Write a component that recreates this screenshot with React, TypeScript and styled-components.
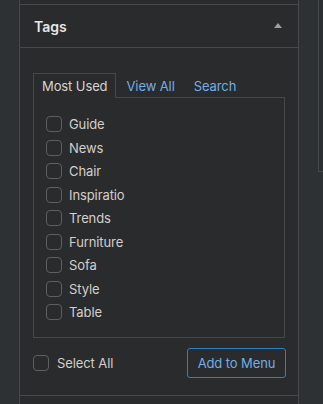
import { FC } from 'react'
import styled, { createGlobalStyle } from 'styled-components'

const GlobalStyle = createGlobalStyle`
  html, body {
    margin: 0;
    padding: 0;
    background: #2e3133;
    font-family: Inter, 'Liberation Sans', sans-serif;
    -webkit-font-smoothing: antialiased;
  }
`

const Page = styled.div`
  display: flex;
  height: 404px;
  overflow: hidden;
`

const Gutter = styled.div`
  width: 19px;
  flex: none;
`

const Sidebar = styled.div`
  width: 280px;
  flex: none;
  box-sizing: border-box;
  border-left: 1px solid #46484a;
  border-right: 1px solid #46484a;
  background: #2a2b2d;
`

const PrevSection = styled.div`
  height: 4px;
  border-bottom: 1px solid #46484a;
`

const Section = styled.section`
  border-bottom: 1px solid #46484a;
`

const Header = styled.div`
  height: 42px;
  display: flex;
  align-items: center;
  justify-content: space-between;
  padding: 0 16px 0 14px;
  border-bottom: 1px solid #46484a;
`

const Title = styled.h3`
  margin: 0;
  font-size: 14px;
  font-weight: 600;
  color: #e8e6e3;
`

const Caret = styled.span`
  width: 0;
  height: 0;
  border-left: 4px solid transparent;
  border-right: 4px solid transparent;
  border-bottom: 5px solid #a59f96;
  margin-top: -1px;
`

const Body = styled.div`
  padding: 25px 13px 17px 13px;
`

const Tabs = styled.div`
  display: flex;
  align-items: flex-start;
  height: 24px;
`

const Tab = styled.div<{ $active?: boolean }>`
  height: ${p => (p.$active ? '25px' : '24px')};
  box-sizing: border-box;
  display: flex;
  align-items: center;
  padding: 0 8px 0 8px;
  font-size: 13px;
  letter-spacing: -0.1px;
  color: ${p => (p.$active ? '#d8d4cd' : '#72aee6')};
  border: 1px solid ${p => (p.$active ? '#46484a' : 'transparent')};
  border-bottom: none;
  background: ${p => (p.$active ? '#2a2b2d' : 'transparent')};
  position: relative;
  z-index: 1;
  & + & {
    margin-left: 1px;
  }
`

const ListBox = styled.div`
  border: 1px solid #46484a;
  height: 241px;
  box-sizing: border-box;
  padding: 18px 12px 0 12px;
  display: flex;
  flex-direction: column;
  gap: 7.5px;
`

const Row = styled.label`
  display: flex;
  align-items: center;
  gap: 7px;
  height: 16px;
  font-size: 13px;
  letter-spacing: -0.1px;
  color: #d3cfc9;
`

const Box = styled.span`
  width: 16px;
  height: 16px;
  box-sizing: border-box;
  border: 1px solid #5e5f61;
  border-radius: 4px;
  flex: none;
`

const Footer = styled.div`
  display: flex;
  align-items: center;
  justify-content: space-between;
  margin-top: 10px;
  margin-right: -1px;
`

const SelectAll = styled(Row)`
  gap: 8px;
`

const Button = styled.button`
  width: 99px;
  height: 30px;
  box-sizing: border-box;
  border: 1px solid #2f7fc4;
  border-radius: 3px;
  background: transparent;
  color: #72aee6;
  font-family: inherit;
  font-size: 13px;
  letter-spacing: -0.1px;
  padding: 0;
`

const RightCol = styled.div`
  flex: 1;
  padding-left: 19px;
`

const RightBox = styled.div`
  height: 171px;
  border-left: 1px solid #46484a;
  border-bottom: 1px solid #46484a;
  background: #2c2f31;
`

const tags = ['Guide', 'News', 'Chair', 'Inspiratio', 'Trends', 'Furniture', 'Sofa', 'Style', 'Table']

const App: FC = () => (
  <>
    <GlobalStyle />
    <Page>
      <Gutter />
      <Sidebar>
        <PrevSection />
        <Section>
          <Header>
            <Title>Tags</Title>
            <Caret />
          </Header>
          <Body>
            <Tabs>
              <Tab $active>Most Used</Tab>
              <Tab>View All</Tab>
              <Tab>Search</Tab>
            </Tabs>
            <ListBox>
              {tags.map(t => (
                <Row key={t}>
                  <Box />
                  {t}
                </Row>
              ))}
            </ListBox>
            <Footer>
              <SelectAll>
                <Box />
                Select All
              </SelectAll>
              <Button>Add to Menu</Button>
            </Footer>
          </Body>
        </Section>
      </Sidebar>
      <RightCol>
        <RightBox />
      </RightCol>
    </Page>
  </>
)

export default App
